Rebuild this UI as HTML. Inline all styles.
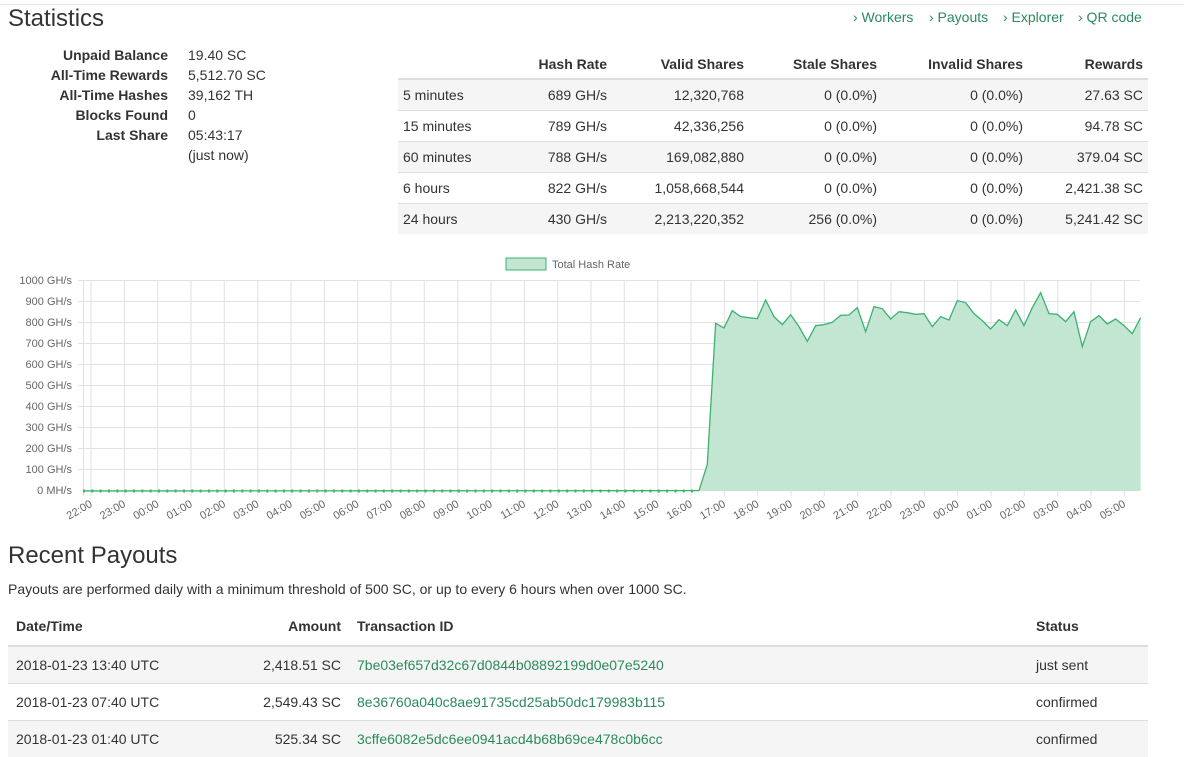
<!DOCTYPE html>
<html><head><meta charset="utf-8"><style>
body{margin:0;width:1184px;height:750px;overflow:hidden;background:#fff;font-family:"Liberation Sans",Arial,sans-serif;font-size:14px;color:#333;position:relative}
.a{position:absolute;white-space:nowrap}
.g{color:#2b8a5e}
table{border-collapse:collapse;position:absolute}
td,th{padding:0 0;white-space:nowrap}
.st th{font-weight:bold;text-align:right;height:30px;vertical-align:bottom;padding-bottom:6px;border-bottom:2px solid #ddd}
.st td{height:30px;border-top:1px solid #ddd;text-align:right}
.st tr.o td{background:#f5f5f5}
.pt th{font-weight:bold;height:38px;border-bottom:2px solid #ddd;text-align:left;padding:0 8px}
.pt td{height:36px;border-top:1px solid #ddd;padding:0 8px}
.pt tr.o td{background:#f5f5f5}
</style></head><body>
<div class="a" style="left:0;top:4px;width:1184px;border-top:1px solid #e5e5e5"></div>
<div class="a" style="left:8px;top:5px;font-size:24px;">Statistics</div>
<div class="a g" style="left:853px;top:9px">› Workers</div>
<div class="a g" style="left:929px;top:9px">› Payouts</div>
<div class="a g" style="left:1003px;top:9px">› Explorer</div>
<div class="a g" style="left:1078px;top:9px">› QR code</div>
<div class="a" style="left:0;top:45px;width:168px;text-align:right;font-weight:bold;line-height:20px">Unpaid Balance<br>All-Time Rewards<br>All-Time Hashes<br>Blocks Found<br>Last Share</div>
<div class="a" style="left:188px;top:45px;line-height:20px">19.40 SC<br>5,512.70 SC<br>39,162 TH<br>0<br>05:43:17<br>(just now)</div>
<table class="st" style="left:398px;top:42px;width:750px">
<tr><th style="text-align:left"></th><th style="width:130px">Hash Rate</th><th style="width:137px">Valid Shares</th><th style="width:133px">Stale Shares</th><th style="width:146px">Invalid Shares</th><th style="width:120px;padding-right:5px">Rewards</th></tr>
<tr class="o"><td style="text-align:left;padding-left:5px">5 minutes</td><td>689 GH/s</td><td>12,320,768</td><td>0 (0.0%)</td><td>0 (0.0%)</td><td style="padding-right:5px">27.63 SC</td></tr>
<tr><td style="text-align:left;padding-left:5px">15 minutes</td><td>789 GH/s</td><td>42,336,256</td><td>0 (0.0%)</td><td>0 (0.0%)</td><td style="padding-right:5px">94.78 SC</td></tr>
<tr class="o"><td style="text-align:left;padding-left:5px">60 minutes</td><td>788 GH/s</td><td>169,082,880</td><td>0 (0.0%)</td><td>0 (0.0%)</td><td style="padding-right:5px">379.04 SC</td></tr>
<tr><td style="text-align:left;padding-left:5px">6 hours</td><td>822 GH/s</td><td>1,058,668,544</td><td>0 (0.0%)</td><td>0 (0.0%)</td><td style="padding-right:5px">2,421.38 SC</td></tr>
<tr class="o"><td style="text-align:left;padding-left:5px">24 hours</td><td>430 GH/s</td><td>2,213,220,352</td><td>256 (0.0%)</td><td>0 (0.0%)</td><td style="padding-right:5px">5,241.42 SC</td></tr>
</table>
<svg class="a" style="left:0;top:250px" width="1184" height="280" viewBox="0 250 1184 280" font-family="Liberation Sans,Arial,sans-serif" font-size="11" fill="#666">
<rect x="506" y="258" width="40" height="12" fill="#c3e6d3" stroke="#3cb371"/>
<text x="552" y="268">Total Hash Rate</text>
<g stroke="#e2e2e2" stroke-width="1">
<line x1="78" y1="280.5" x2="1140" y2="280.5"/><line x1="78" y1="301.5" x2="1140" y2="301.5"/><line x1="78" y1="322.5" x2="1140" y2="322.5"/><line x1="78" y1="343.5" x2="1140" y2="343.5"/><line x1="78" y1="364.5" x2="1140" y2="364.5"/><line x1="78" y1="385.5" x2="1140" y2="385.5"/><line x1="78" y1="406.5" x2="1140" y2="406.5"/><line x1="78" y1="427.5" x2="1140" y2="427.5"/><line x1="78" y1="448.5" x2="1140" y2="448.5"/><line x1="78" y1="469.5" x2="1140" y2="469.5"/>
<line x1="83.5" y1="280" x2="83.5" y2="496"/>
<line x1="91" y1="280" x2="91" y2="496"/><line x1="124.3" y1="280" x2="124.3" y2="496"/><line x1="157.7" y1="280" x2="157.7" y2="496"/><line x1="191" y1="280" x2="191" y2="496"/><line x1="224.3" y1="280" x2="224.3" y2="496"/><line x1="257.7" y1="280" x2="257.7" y2="496"/><line x1="291" y1="280" x2="291" y2="496"/><line x1="324.3" y1="280" x2="324.3" y2="496"/><line x1="357.7" y1="280" x2="357.7" y2="496"/><line x1="391" y1="280" x2="391" y2="496"/><line x1="424.3" y1="280" x2="424.3" y2="496"/><line x1="457.7" y1="280" x2="457.7" y2="496"/><line x1="491" y1="280" x2="491" y2="496"/><line x1="524.3" y1="280" x2="524.3" y2="496"/><line x1="557.7" y1="280" x2="557.7" y2="496"/><line x1="591" y1="280" x2="591" y2="496"/><line x1="624.3" y1="280" x2="624.3" y2="496"/><line x1="657.7" y1="280" x2="657.7" y2="496"/><line x1="691" y1="280" x2="691" y2="496"/><line x1="724.3" y1="280" x2="724.3" y2="496"/><line x1="757.7" y1="280" x2="757.7" y2="496"/><line x1="791" y1="280" x2="791" y2="496"/><line x1="824.3" y1="280" x2="824.3" y2="496"/><line x1="857.7" y1="280" x2="857.7" y2="496"/><line x1="891" y1="280" x2="891" y2="496"/><line x1="924.3" y1="280" x2="924.3" y2="496"/><line x1="957.7" y1="280" x2="957.7" y2="496"/><line x1="991" y1="280" x2="991" y2="496"/><line x1="1024.3" y1="280" x2="1024.3" y2="496"/><line x1="1057.7" y1="280" x2="1057.7" y2="496"/><line x1="1091" y1="280" x2="1091" y2="496"/><line x1="1124.3" y1="280" x2="1124.3" y2="496"/>
</g>
<g text-anchor="end">
<text x="72" y="284">1000 GH/s</text><text x="72" y="305">900 GH/s</text><text x="72" y="326">800 GH/s</text><text x="72" y="347">700 GH/s</text><text x="72" y="368">600 GH/s</text><text x="72" y="389">500 GH/s</text><text x="72" y="410">400 GH/s</text><text x="72" y="431">300 GH/s</text><text x="72" y="452">200 GH/s</text><text x="72" y="473">100 GH/s</text><text x="72" y="494">0 MH/s</text>
</g>
<g transform="translate(680,270) scale(0.3333)">
<polygon fill="#c3e6d3" points="-1791,663 57,662 82,583 107,160 132,174 157,122 182,140 207,143 232,146 257,90 282,140 307,164 332,134 357,170 382,214 407,167 432,164 457,157 482,136 507,135 532,113 557,185 582,110 607,116 632,147 657,125 682,128 707,133 732,131 757,170 782,140 807,150 832,92 857,98 882,131 907,152 932,177 957,149 982,167 1007,120 1032,167 1057,113 1082,68 1107,131 1132,133 1157,155 1182,125 1207,230 1232,155 1257,137 1282,162 1307,147 1332,167 1357,191 1382,143 1382,663"/>
<polyline fill="none" stroke="#3cb371" stroke-width="4" points="-1791,663 57,662 82,583 107,160 132,174 157,122 182,140 207,143 232,146 257,90 282,140 307,164 332,134 357,170 382,214 407,167 432,164 457,157 482,136 507,135 532,113 557,185 582,110 607,116 632,147 657,125 682,128 707,133 732,131 757,170 782,140 807,150 832,92 857,98 882,131 907,152 932,177 957,149 982,167 1007,120 1032,167 1057,113 1082,68 1107,131 1132,133 1157,155 1182,125 1207,230 1232,155 1257,137 1282,162 1307,147 1332,167 1357,191 1382,143"/>
</g>
<line x1="83" y1="491" x2="699" y2="491" stroke="#3cb371" stroke-width="3" stroke-dasharray="2 6.33"/>
<g text-anchor="end">
<text transform="translate(93,506) rotate(-30)">22:00</text><text transform="translate(126.3,506) rotate(-30)">23:00</text><text transform="translate(159.7,506) rotate(-30)">00:00</text><text transform="translate(193,506) rotate(-30)">01:00</text><text transform="translate(226.3,506) rotate(-30)">02:00</text><text transform="translate(259.7,506) rotate(-30)">03:00</text><text transform="translate(293,506) rotate(-30)">04:00</text><text transform="translate(326.3,506) rotate(-30)">05:00</text><text transform="translate(359.7,506) rotate(-30)">06:00</text><text transform="translate(393,506) rotate(-30)">07:00</text><text transform="translate(426.3,506) rotate(-30)">08:00</text><text transform="translate(459.7,506) rotate(-30)">09:00</text><text transform="translate(493,506) rotate(-30)">10:00</text><text transform="translate(526.3,506) rotate(-30)">11:00</text><text transform="translate(559.7,506) rotate(-30)">12:00</text><text transform="translate(593,506) rotate(-30)">13:00</text><text transform="translate(626.3,506) rotate(-30)">14:00</text><text transform="translate(659.7,506) rotate(-30)">15:00</text><text transform="translate(693,506) rotate(-30)">16:00</text><text transform="translate(726.3,506) rotate(-30)">17:00</text><text transform="translate(759.7,506) rotate(-30)">18:00</text><text transform="translate(793,506) rotate(-30)">19:00</text><text transform="translate(826.3,506) rotate(-30)">20:00</text><text transform="translate(859.7,506) rotate(-30)">21:00</text><text transform="translate(893,506) rotate(-30)">22:00</text><text transform="translate(926.3,506) rotate(-30)">23:00</text><text transform="translate(959.7,506) rotate(-30)">00:00</text><text transform="translate(993,506) rotate(-30)">01:00</text><text transform="translate(1026.3,506) rotate(-30)">02:00</text><text transform="translate(1059.7,506) rotate(-30)">03:00</text><text transform="translate(1093,506) rotate(-30)">04:00</text><text transform="translate(1126.3,506) rotate(-30)">05:00</text>
</g>
</svg>
<div class="a" style="left:8px;top:542px;font-size:24px">Recent Payouts</div>
<div class="a" style="left:8px;top:581px">Payouts are performed daily with a minimum threshold of 500 SC, or up to every 6 hours when over 1000 SC.</div>
<table class="pt" style="left:8px;top:607px;width:1140px">
<tr><th style="width:158px">Date/Time</th><th style="width:151px;text-align:right">Amount</th><th style="width:663px">Transaction ID</th><th>Status</th></tr>
<tr class="o"><td>2018-01-23 13:40 UTC</td><td style="text-align:right">2,418.51 SC</td><td class="g">7be03ef657d32c67d0844b08892199d0e07e5240</td><td>just sent</td></tr>
<tr><td>2018-01-23 07:40 UTC</td><td style="text-align:right">2,549.43 SC</td><td class="g">8e36760a040c8ae91735cd25ab50dc179983b115</td><td>confirmed</td></tr>
<tr class="o"><td>2018-01-23 01:40 UTC</td><td style="text-align:right">525.34 SC</td><td class="g">3cffe6082e5dc6ee0941acd4b68b69ce478c0b6cc</td><td>confirmed</td></tr>
</table>
</body></html>
